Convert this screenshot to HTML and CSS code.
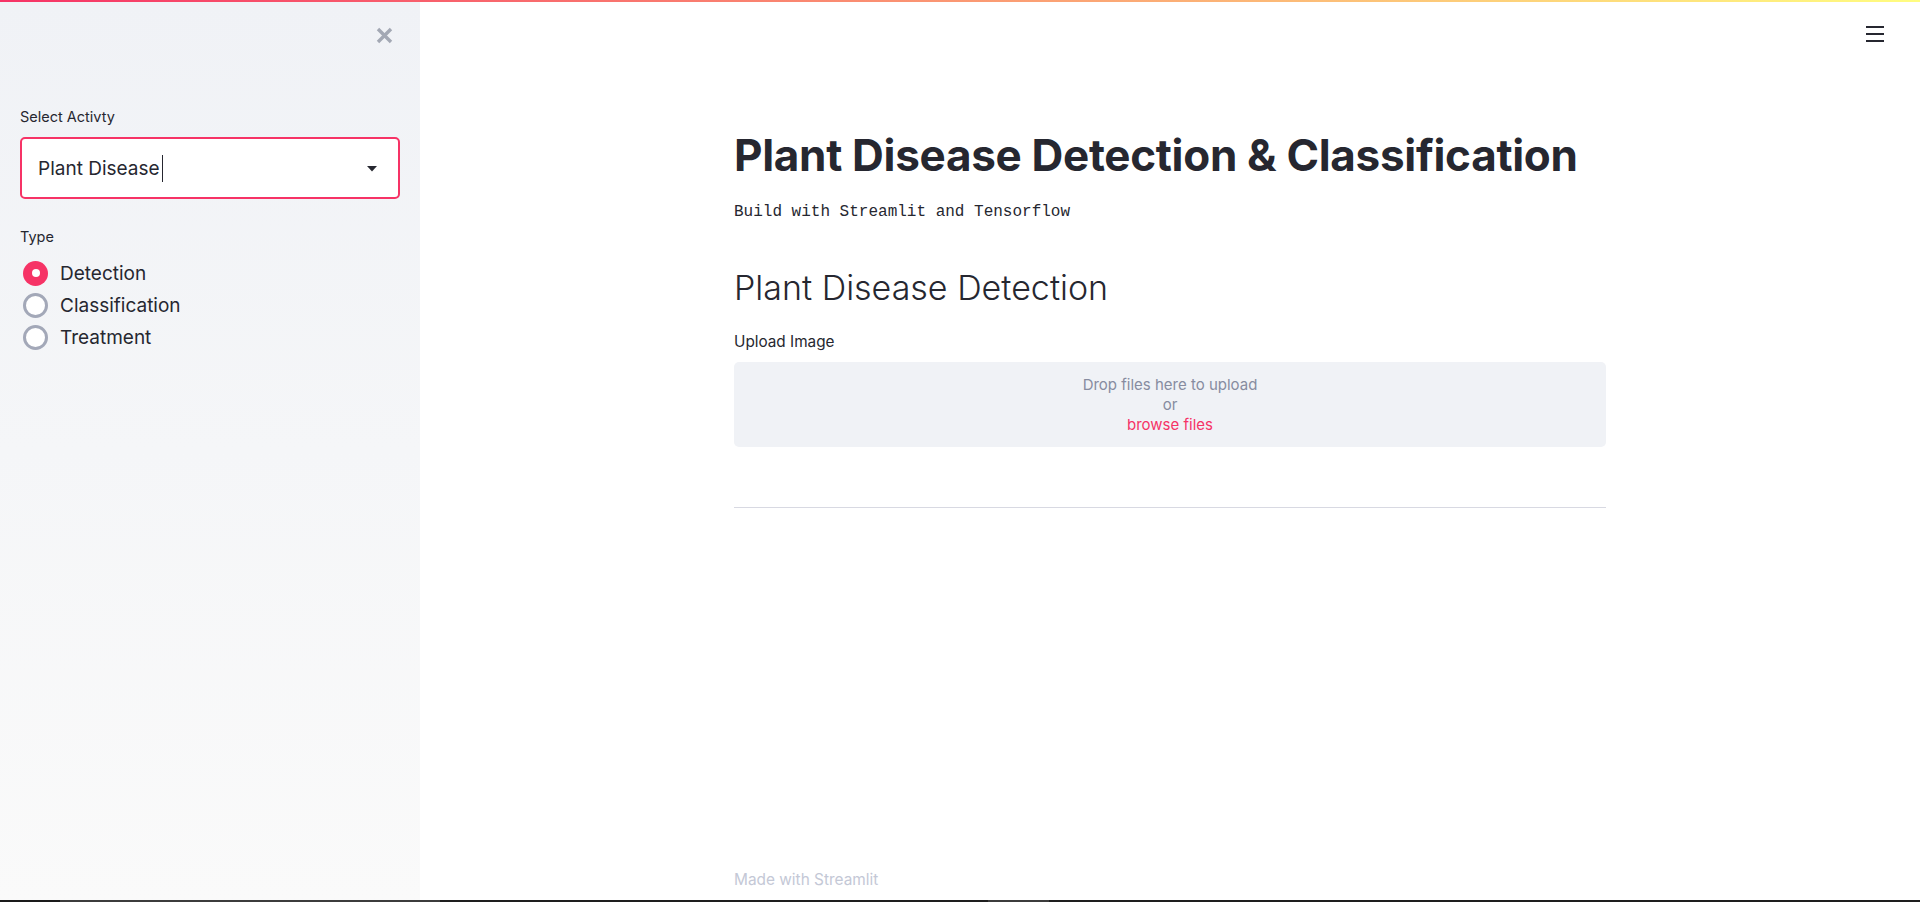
FILE: index.html
```html
<!DOCTYPE html>
<html lang="en">
<head>
<meta charset="utf-8">
<title>Plant Disease Detection</title>
<link rel="stylesheet" href="styles.css">
</head>
<body>
<div class="decoration"></div>
<div class="app">
  <aside class="sidebar">
    <div class="sb-head">
      <svg class="close" width="17" height="17" viewBox="0 0 17 17" aria-label="Close sidebar">
        <path d="M2 2 L15 15 M15 2 L2 15" stroke="#a3a8b4" stroke-width="3.4" fill="none"/>
      </svg>
    </div>
    <div class="sb-label">Select Activty</div>
    <div class="select">
      <span class="select-value">Plant Disease<span class="cursor"></span></span>
      <svg class="caret" width="10" height="6" viewBox="0 0 10 6"><path d="M0 0 H10 L5 5.5 Z" fill="#262730"/></svg>
    </div>
    <div class="sb-label type-label">Type</div>
    <div class="radios">
      <div class="radio checked"><span class="dot"></span><span class="radio-text">Detection</span></div>
      <div class="radio"><span class="dot"></span><span class="radio-text">Classification</span></div>
      <div class="radio"><span class="dot"></span><span class="radio-text">Treatment</span></div>
    </div>
  </aside>
  <main class="main">
    <header class="main-head">
      <svg class="burger" width="18" height="16" viewBox="0 0 18 16" aria-label="Menu">
        <rect x="0" y="0" width="18" height="2" fill="#262730"/>
        <rect x="0" y="7" width="18" height="2" fill="#262730"/>
        <rect x="0" y="14" width="18" height="2" fill="#262730"/>
      </svg>
    </header>
    <div class="block">
      <h1 class="title">Plant Disease Detection &amp; Classification</h1>
      <p class="subtitle">Build with Streamlit and Tensorflow</p>
      <h2 class="section">Plant Disease Detection</h2>
      <div class="field-label">Upload Image</div>
      <div class="dropzone">
        <div class="dz-line">Drop files here to upload</div>
        <div class="dz-line">or</div>
        <div class="dz-line browse">browse files</div>
      </div>
      <hr class="rule">
    </div>
    <footer class="footer">Made with Streamlit</footer>
  </main>
</div>
<div class="taskbar"><span class="tb-a"></span><span class="tb-b"></span><span class="tb-c"></span><span class="tb-d"></span><span class="tb-e"></span></div>
</body>
</html>
```
FILE: styles.css
```css
* { box-sizing: border-box; }
html, body { margin: 0; padding: 0; }
body {
  font-family: Inter, "Noto Sans", sans-serif;
  color: #262730;
  background: #ffffff;
  width: 1920px;
  height: 902px;
  overflow: hidden;
}
.decoration {
  height: 2px;
  background: linear-gradient(90deg, #f63366, #fffd80);
}
.app {
  display: flex;
  height: 898px;
}
.sidebar {
  width: 420px;
  flex: none;
  background: linear-gradient(180deg, #f0f2f6, #fafafa);
  padding: 0 20px;
  display: flex;
  flex-direction: column;
}
.sb-head {
  display: flex;
  justify-content: flex-end;
  padding-top: 25px;
  padding-right: 7px;
  height: 105px;
}
.close { display: block; }
.sb-label {
  font-size: 14.5px;
  line-height: 20px;
  height: 20px;
  color: #262730;
}
.select {
  margin-top: 10px;
  height: 62px;
  border: 2px solid #f63366;
  border-radius: 5px;
  background: #ffffff;
  display: flex;
  align-items: center;
  padding: 0 21px 0 16px;
  justify-content: space-between;
}
.select-value {
  font-size: 19px;
  line-height: 23px;
  display: flex;
  align-items: center;
}
.cursor {
  display: inline-block;
  width: 1px;
  height: 27px;
  background: #262730;
  margin-left: 2px;
}
.caret { display: block; margin-top: 1px; }
.type-label { margin-top: 28px; }
.radios {
  margin-top: 10px;
  display: flex;
  flex-direction: column;
}
.radio {
  height: 32px;
  display: flex;
  align-items: center;
  padding-left: 3px;
}
.dot {
  width: 25px;
  height: 25px;
  border-radius: 50%;
  border: 3px solid #a3a8b8;
  background: #ffffff;
  flex: none;
  position: relative;
}
.radio.checked .dot {
  border: none;
  background: #f63366;
}
.radio.checked .dot::after {
  content: "";
  position: absolute;
  left: 8.5px;
  top: 8.5px;
  width: 8px;
  height: 8px;
  border-radius: 50%;
  background: #ffffff;
}
.radio-text {
  font-size: 19px;
  line-height: 23px;
  margin-left: 12px;
  color: #262730;
}
.main {
  flex: 1;
  display: flex;
  flex-direction: column;
  min-width: 0;
}
.main-head {
  height: 46px;
  display: flex;
  justify-content: flex-end;
  align-items: flex-start;
  padding-top: 24px;
  padding-right: 36px;
}
.burger { display: block; }
.block {
  width: 872px;
  margin: 0 auto;
  padding-top: 81px;
}
.title {
  margin: 0;
  font-size: 44px;
  line-height: 52px;
  font-weight: 700;
  letter-spacing: -0.3px;
  color: #262730;
}
.subtitle {
  margin: 19px 0 0;
  font-family: "Liberation Mono", "DejaVu Sans Mono", monospace;
  font-size: 16px;
  line-height: 24px;
  color: #262730;
}
.section {
  margin: 42px 0 0;
  font-size: 34px;
  line-height: 44px;
  font-weight: 300;
  color: #262730;
}
.field-label {
  margin-top: 22px;
  font-size: 15.3px;
  line-height: 20px;
  color: #262730;
}
.dropzone {
  margin-top: 10px;
  height: 85px;
  background: #f0f2f6;
  border-radius: 5px;
  padding: 13px 0 12px;
  text-align: center;
}
.dz-line {
  font-size: 15px;
  line-height: 20px;
  color: #878ca0;
}
.dz-line.browse { color: #f63366; }
.rule {
  margin: 60px 0 0;
  border: none;
  height: 1px;
  background: #d8d9e2;
}
.footer {
  margin-top: auto;
  width: 872px;
  margin-left: auto;
  margin-right: auto;
  font-size: 15.4px;
  line-height: 20px;
  padding-bottom: 10px;
  color: #c4c8d6;
}
.taskbar {
  height: 2px;
  display: flex;
}
.taskbar span { display: block; height: 2px; }
.tb-a { width: 60px; background: #1a1a1a; }
.tb-b { width: 380px; background: #3c3c3c; }
.tb-c { width: 548px; background: #1e1e1e; }
.tb-d { width: 61px; background: #3c3c3c; }
.tb-e { flex: 1; background: #1e1e1e; }
```
